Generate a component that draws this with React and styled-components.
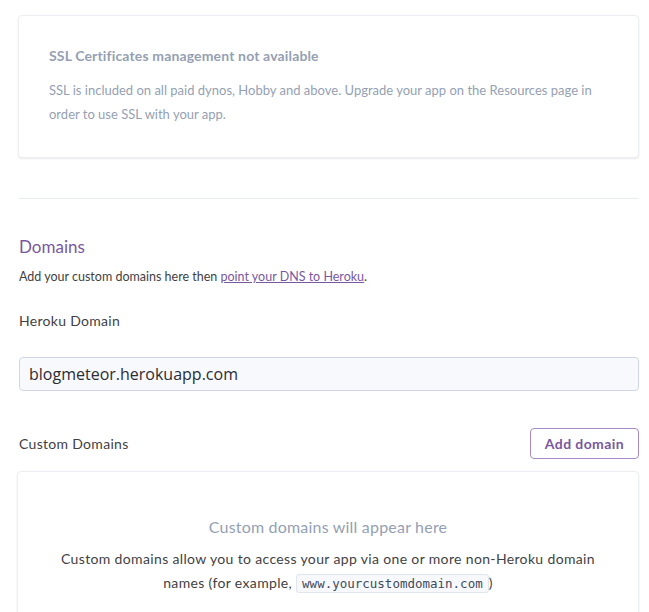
import React from "react";
import styled, { createGlobalStyle } from "styled-components";

const GlobalStyle = createGlobalStyle`
  html, body { margin: 0; padding: 0; background: #ffffff; }
  body { font-family: Lato, "Liberation Sans", Arial, sans-serif; -webkit-font-smoothing: antialiased; }
  * { box-sizing: border-box; }
`;

const Page = styled.div`
  width: 649px;
  padding: 15px 10px 0 18px;
`;

const Card = styled.div`
  background: #fff;
  border: 1px solid #eceef3;
  border-radius: 4px;
  box-shadow: 0 1px 2px rgba(0, 0, 0, 0.09);
  padding: ${(p) => p.$padding};
  text-align: ${(p) => (p.$center ? "center" : "left")};
`;

const CardTitle = styled.div`
  font-size: 14px;
  font-weight: 700;
  letter-spacing: 0.15px;
  color: #959fb3;
  line-height: 20px;
  margin-bottom: 12px;
`;

const CardText = styled.p`
  margin: 0;
  font-size: 13px;
  line-height: 24px;
  color: #959fb3;
`;

const Divider = styled.hr`
  border: 0;
  border-top: 1px solid #e8ebf1;
  margin: 40px 0 0 1px;
`;

const Section = styled.section`
  padding: 36px 0 0 1px;
`;

const Heading = styled.h2`
  margin: 0;
  font-size: 17px;
  font-weight: 400;
  line-height: 24px;
  color: #79589f;
`;

const Lead = styled.p`
  margin: 8px 0 0;
  font-size: 12.5px;
  line-height: 20px;
  color: #3f3f44;
`;

const Link = styled.a`
  color: #79589f;
  text-decoration: underline;
`;

const Label = styled.div`
  font-size: 14px;
  letter-spacing: 0.3px;
  line-height: 20px;
  color: #3f3f44;
  margin-top: ${(p) => p.$top}px;
`;

const DomainInput = styled.input`
  display: block;
  width: 100%;
  height: 34px;
  margin-top: 26px;
  padding: 0 9px;
  font-family: "Open Sans", "Liberation Sans", sans-serif;
  font-size: 16px;
  color: #2d2d33;
  background: #f7f9fc;
  border: 1px solid #cfd7e6;
  border-radius: 4px;
  outline: none;
`;

const Row = styled.div`
  display: flex;
  align-items: center;
  justify-content: space-between;
  margin-top: 37px;
`;

const OutlineButton = styled.button`
  height: 31px;
  padding: 0 14px;
  font-family: inherit;
  font-size: 14px;
  font-weight: 700;
  letter-spacing: 0.4px;
  color: #79589f;
  background: #fff;
  border: 1px solid #a68ac6;
  border-radius: 4px;
`;

const EmptyCard = styled(Card)`
  margin: 12px 0 0 -1px;
  height: 160px;
`;

const EmptyTitle = styled.div`
  font-size: 16px;
  letter-spacing: 0.2px;
  line-height: 24px;
  color: #959fb3;
  margin-bottom: 8px;
`;

const EmptyText = styled.p`
  margin: 0;
  font-size: 14px;
  letter-spacing: 0.35px;
  line-height: 24px;
  color: #3f3f44;
`;

const Code = styled.code`
  font-family: "DejaVu Sans Mono", "Liberation Mono", monospace;
  font-size: 12.5px;
  letter-spacing: 0;
  color: #3f4a5c;
  background: #f7f8fb;
  border: 1px solid #e1e5ec;
  border-radius: 3px;
  padding: 1px 5px;
`;

export default function App() {
  return (
    <>
      <GlobalStyle />
      <Page>
        <Card $padding="30px 20px 31px 30px">
          <CardTitle>SSL Certificates management not available</CardTitle>
          <CardText>
            SSL is included on all paid dynos, Hobby and above. Upgrade your app on the Resources page in
            <br />
            order to use SSL with your app.
          </CardText>
        </Card>
        <Divider />
        <Section>
          <Heading>Domains</Heading>
          <Lead>
            Add your custom domains here then <Link href="#">point your DNS to Heroku</Link>.
          </Lead>
          <Label $top={24}>Heroku Domain</Label>
          <DomainInput readOnly value="blogmeteor.herokuapp.com" />
          <Row>
            <Label $top={0}>Custom Domains</Label>
            <OutlineButton>Add domain</OutlineButton>
          </Row>
        </Section>
        <EmptyCard $padding="43px 40px 0" $center>
          <EmptyTitle>Custom domains will appear here</EmptyTitle>
          <EmptyText>
            Custom domains allow you to access your app via one or more non-Heroku domain
            <br />
            names (for example, <Code>www.yourcustomdomain.com</Code>)
          </EmptyText>
        </EmptyCard>
      </Page>
    </>
  );
}
